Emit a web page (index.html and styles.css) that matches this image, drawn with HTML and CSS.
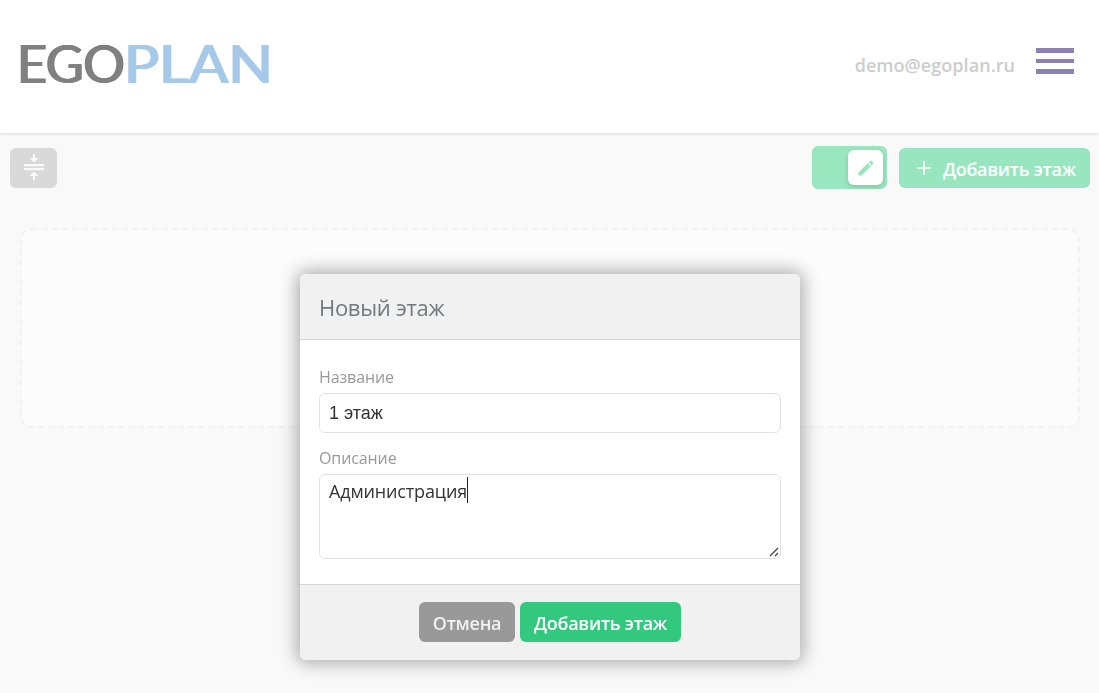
FILE: index.html
```
<!DOCTYPE html>
<html lang="ru">
<head>
    <meta charset="UTF-8">
    <meta name="viewport" content="width=device-width, initial-scale=1.0">
    <title>EGOPLAN</title>
    <link rel="stylesheet" href="styles.css">
</head>
<body>

<header class="header">
    <a class="logo" href="#"><span class="logo-ego">EGO</span><span class="logo-plan">PLAN</span></a>
    <div class="user">
        <span class="email">demo@egoplan.ru</span>
        <div class="burger">
            <span></span>
            <span></span>
            <span></span>
        </div>
    </div>
</header>

<div class="toolbar">
    <button class="btn btn-collapse">
        <svg width="24" height="30" viewBox="0 0 24 30">
            <path d="M11 2h2v4h3.500L12 10.500 7.500 6H11zM2 12h20v2.200H2zM2 16h20v2.200H2zM12 19.500l4.500 4.500H13v4h-2v-4H7.500z"/>
        </svg>
    </button>
    <div class="toolbar-right">
        <div class="switch">
            <div class="switch-knob">
                <svg width="20" height="20" viewBox="0 0 24 24">
                    <path d="M3 17.250V21h3.750L17.810 9.940l-3.750-3.750L3 17.250zM20.710 7.040a1 1 0 0 0 0-1.410l-2.340-2.340a1 1 0 0 0-1.410 0l-1.830 1.830 3.750 3.750 1.830-1.830z"/>
                </svg>
            </div>
        </div>
        <button class="btn btn-add">
            <svg width="14" height="14" viewBox="0 0 14 14"><path d="M7 0v14M0 7h14"/></svg>
            <span>Добавить этаж</span>
        </button>
    </div>
</div>

<svg class="floor" width="1060" height="200">
    <rect x="1" y="1" width="1058" height="198" rx="11"/>
</svg>

<div class="overlay">
    <div class="modal">
        <div class="modal-header">
            <h2>Новый этаж</h2>
        </div>
        <div class="modal-body">
            <label for="name">Название</label>
            <input type="text" id="name" value="1 этаж">
            <label for="description">Описание</label>
            <div class="area">
                <textarea id="description">Администрация</textarea>
                <span class="caret"></span>
                <svg class="grip" width="10" height="10" viewBox="0 0 10 10"><path d="M1 9l8-8M6 9l3-3"/></svg>
            </div>
        </div>
        <div class="modal-footer">
            <button class="btn btn-cancel">Отмена</button>
            <button class="btn btn-submit">Добавить этаж</button>
        </div>
    </div>
</div>

</body>
</html>
```
FILE: styles.css
```
* {
    box-sizing: border-box;
}
body {
    font-family: 'Open Sans', 'Noto Sans', sans-serif;
    font-size: 18px;
    background-color: #f9f9f9;
    margin: 0;
    height: 693px;
    overflow: hidden;
}
.header {
    height: 133px;
    padding: 0 25px 0 16px;
    display: flex;
    justify-content: space-between;
    background-color: #ffffff;
    box-shadow: 0 1px 3px rgba(0, 0, 0, 0.12);
}
.logo {
    margin-top: 32px;
    font-family: Lato, sans-serif;
    font-size: 52px;
    line-height: 62px;
    white-space: nowrap;
    text-decoration: none;
}
.logo-ego {
    color: #808080;
    letter-spacing: -0.500px;
    text-shadow: 1px 0 0 #808080, 2px 0 0 #808080;
}
.logo-plan {
    display: inline-block;
    color: #a6c9ea;
    text-shadow: 1px 0 0 #a6c9ea, 2px 0 0 #a6c9ea;
    transform: scaleX(1.12);
    transform-origin: left;
}
.user {
    display: flex;
    align-items: flex-start;
    gap: 21px;
}
.email {
    margin-top: 53px;
    line-height: 25px;
    font-weight: 600;
    letter-spacing: 0.060px;
    color: #cccccc;
}
.burger {
    width: 38px;
    margin-top: 48px;
    display: flex;
    flex-direction: column;
    gap: 6px;
}
.burger span {
    height: 4.500px;
    background-color: #8b82b3;
}
.toolbar {
    height: 95px;
    padding: 13px 9px 0 10px;
    display: flex;
    justify-content: space-between;
    align-items: flex-start;
}
.toolbar-right {
    display: flex;
    gap: 12px;
}
.btn {
    height: 40px;
    padding: 0;
    border: none;
    border-radius: 6px;
    display: flex;
    justify-content: center;
    align-items: center;
    font-family: inherit;
    font-size: 18px;
    font-weight: 600;
    line-height: 24px;
    letter-spacing: -0.250px;
    color: #ffffff;
    white-space: nowrap;
}
.btn-collapse {
    width: 47px;
    margin-top: 2px;
    background-color: #d9d9d9;
    fill: #fafafa;
}
.btn-collapse svg {
    margin-top: -2px;
}
.switch {
    width: 75px;
    height: 43px;
    padding: 4px;
    display: flex;
    justify-content: flex-end;
    border-radius: 6px;
    background-color: #9ae6bf;
}
.switch-knob {
    width: 35px;
    height: 35px;
    display: flex;
    justify-content: center;
    align-items: center;
    border-radius: 6px;
    background-color: #ffffff;
    box-shadow: 0 2px 5px rgba(0, 0, 0, 0.15);
    fill: #98e6bf;
}
.btn-add {
    width: 191px;
    margin-top: 2px;
    padding-right: 14px;
    justify-content: flex-end;
    gap: 12px;
    background-color: #98e6bf;
}
.btn-add svg {
    stroke: #ffffff;
    stroke-width: 1.500;
}
.btn-add span {
    margin-top: 2px;
}
.floor {
    display: block;
    margin-left: 20px;
}
.floor rect {
    fill: #fcfcfc;
    stroke: #eff3f2;
    stroke-width: 2;
    stroke-dasharray: 6 4;
}
.overlay {
    position: fixed;
    inset: 0;
    padding-top: 274px;
    display: flex;
    justify-content: center;
    align-items: flex-start;
}
.modal {
    width: 500px;
    margin-left: 1px;
    border-radius: 6px;
    background-color: #ffffff;
    box-shadow: 0 0 18px 3px rgba(0, 0, 0, 0.33);
}
.modal-header {
    height: 66px;
    padding: 17px 19px 0;
    border-bottom: 1px solid #d5d5d5;
    border-radius: 6px 6px 0 0;
    background-color: #f1f1f1;
}
.modal-header h2 {
    margin: 0;
    font-size: 22px;
    font-weight: 400;
    line-height: 32px;
    letter-spacing: -0.300px;
    color: #75787b;
}
.modal-body {
    height: 244px;
    padding: 25px 19px 0;
}
.modal-body label {
    display: block;
    height: 28px;
    font-size: 16px;
    line-height: 24px;
    letter-spacing: -0.100px;
    color: #999999;
}
input, textarea {
    display: block;
    width: 100%;
    margin: 0;
    padding: 4px 9px;
    border: 1px solid #e1e3e3;
    border-radius: 6px;
    outline: none;
    background-color: #ffffff;
    font-size: 18px;
    color: #333333;
}
input {
    height: 40px;
    margin-bottom: 13px;
    font-family: 'Liberation Sans', Arial, sans-serif;
}
textarea {
    height: 85px;
    font-family: inherit;
    line-height: 25px;
    letter-spacing: -0.150px;
    resize: none;
}
.area {
    position: relative;
}
.caret {
    position: absolute;
    left: 148px;
    top: 3px;
    width: 1px;
    height: 26px;
    background-color: #222222;
}
.grip {
    position: absolute;
    right: 2px;
    bottom: 2px;
    fill: none;
    stroke: #444444;
    stroke-width: 1.300;
}
.modal-footer {
    height: 76px;
    padding-top: 17px;
    display: flex;
    justify-content: center;
    gap: 5px;
    border-top: 1px solid #d5d5d5;
    border-radius: 0 0 6px 6px;
    background-color: #f1f1f1;
}
.modal-footer .btn {
    padding-top: 2px;
}
.btn-cancel {
    width: 96px;
    background-color: #999999;
    color: #f1f1f1;
}
.btn-submit {
    width: 161px;
    background-color: #32c97e;
}
```
